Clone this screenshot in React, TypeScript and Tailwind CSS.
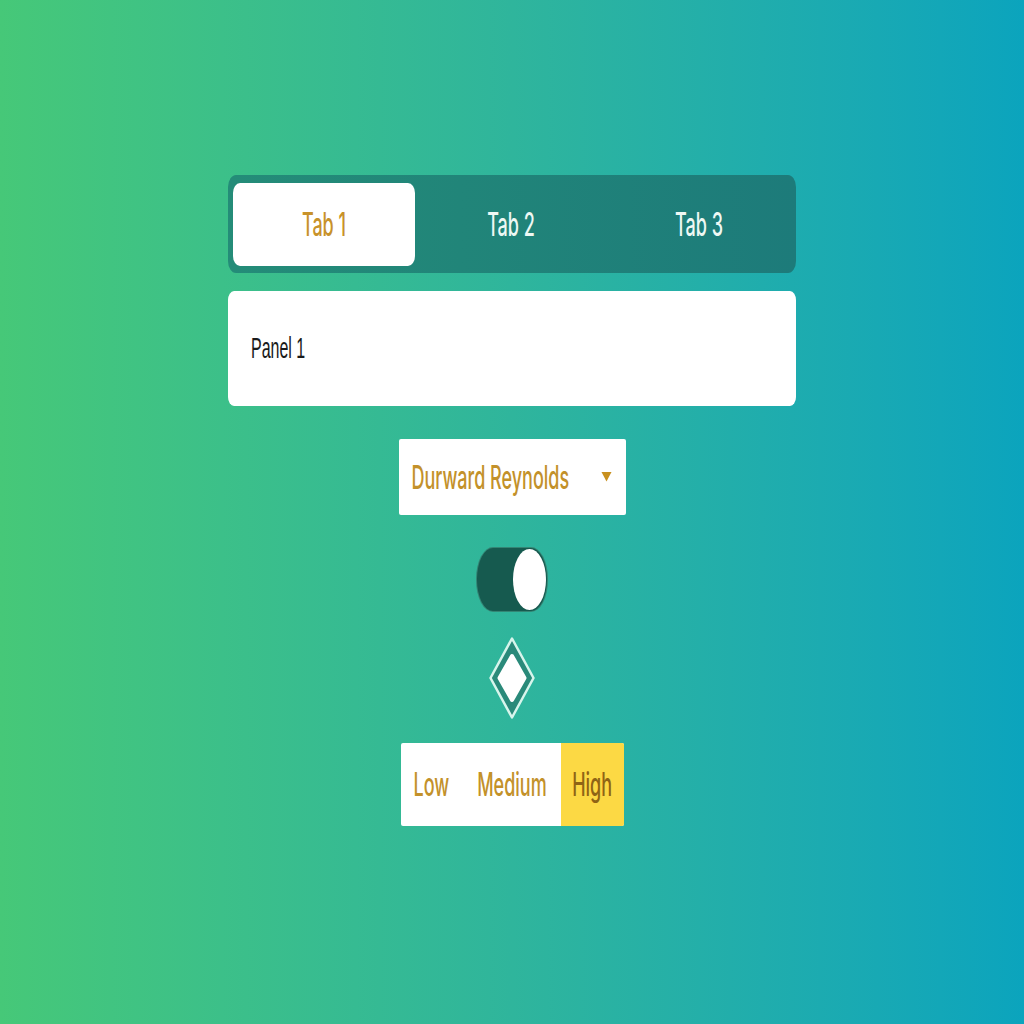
import React from "react";

function T({ children, className = "" }: { children: React.ReactNode; className?: string }) {
  return <span className={"inline-block scale-y-[1.8] " + className}>{children}</span>;
}

export default function App() {
  return (
    <div
      className="w-full h-[1024px] bg-gradient-to-r from-[#46c878] via-[#2fb59c] to-[#0ba4bd] flex flex-col items-center pt-[175px]"
      style={{ fontFamily: "Inter, 'Noto Sans', sans-serif" }}
    >
      {/* Tabs */}
      <div className="w-[568px] h-[98px] rounded-[8px/12px] bg-gradient-to-r from-[#248c78] to-[#1d7b7a] flex px-[5px] pt-[8px] pb-[7px] gap-[4px]">
        <div className="w-[182px] h-full rounded-[7px/10px] bg-white flex items-center justify-center text-[18px] font-medium text-[#c8922a]">
          <T>Tab 1</T>
        </div>
        <div className="flex-1 flex items-center justify-center text-[18px] font-medium text-[#eef8f4]">
          <T>Tab 2</T>
        </div>
        <div className="flex-1 flex items-center justify-center text-[18px] font-medium text-[#eef8f4]">
          <T>Tab 3</T>
        </div>
      </div>

      {/* Panel */}
      <div
        className="mt-[18px] w-[568px] h-[115px] rounded-[6px/9px] bg-white flex items-center pl-[23px] text-[16px] text-[#1a1a1a]"
        style={{ fontFamily: "'Liberation Sans', Arial, sans-serif" }}
      >
        <T>Panel 1</T>
      </div>

      {/* Listbox */}
      <div className="mt-[33px] w-[227px] h-[76px] rounded-[2px] bg-white flex items-center justify-between pl-[13px] pr-[14px] text-[18px] font-medium text-[#c3912a]">
        <T>Durward Reynolds</T>
        <svg width="11" height="11" viewBox="0 0 11 11" className="mb-[1px]">
          <polygon points="0.5,1 10.5,1 5.5,10.5" fill="#c8901f" />
        </svg>
      </div>

      {/* Switch */}
      <div className="mt-[32px] w-[72px] h-[65px] rounded-[17px/32px] bg-[#165a4f] border border-[#5fc5ac]/40 flex items-center justify-end pr-[1px]">
        <div className="w-[33px] h-[61px] rounded-[50%] bg-white" />
      </div>

      {/* Slider thumb diamond */}
      <div className="mt-[24px]">
        <svg width="48" height="84" viewBox="0 0 48 84">
          <path
            d="M24 2.5 L45.5 42 L24 81.5 L2.5 42 Z"
            fill="#2a8a7a"
            stroke="#d7f5ec"
            strokeWidth="2.5"
            strokeLinejoin="round"
          />
          <path
            d="M24 20 L36.5 42 L24 64 L11.5 42 Z"
            fill="#ffffff"
            stroke="#ffffff"
            strokeWidth="4"
            strokeLinejoin="round"
          />
        </svg>
      </div>

      {/* Radio group */}
      <div className="mt-[23px] w-[223px] h-[83px] bg-white rounded-[2px] flex text-[18px] font-medium overflow-hidden">
        <div className="pl-[13px] pr-[14px] flex items-center text-[#c3912a]">
          <T>Low</T>
        </div>
        <div className="px-[14px] flex items-center text-[#c3912a]">
          <T>Medium</T>
        </div>
        <div className="flex-1 bg-[#fcd944] flex items-center justify-center text-[#8f6415]">
          <T>High</T>
        </div>
      </div>
    </div>
  );
}
